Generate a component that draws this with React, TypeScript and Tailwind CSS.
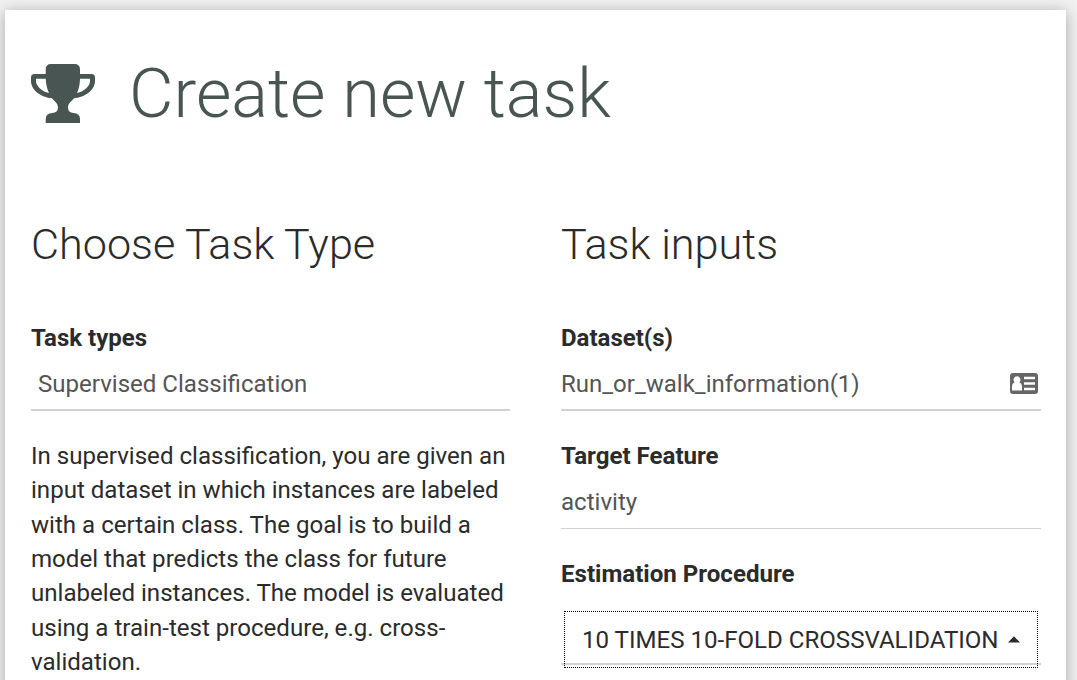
import type { SVGProps } from "react";

const description = [
  "In supervised classification, you are given an",
  "input dataset in which instances are labeled",
  "with a certain class. The goal is to build a",
  "model that predicts the class for future",
  "unlabeled instances. The model is evaluated",
  "using a train-test procedure, e.g. cross-",
  "validation.",
];

function TrophyIcon(props: SVGProps<SVGSVGElement>) {
  return (
    <svg viewBox="0 0 64 60" fill="currentColor" {...props}>
      <path
        fillRule="evenodd"
        d="M20 0H43.500Q49 0 49 5.500V10H60.500Q64 10 64 13.500V17C64 26 54 33.500 43 34.200C40.500 37.500 37 39 37 43.500Q37 48.800 42.500 48.900Q49 49.200 49 55V59H14.700V55Q14.700 49.200 21.200 48.900Q27 48.800 27 43.500C27 39 23.500 37.500 21 34.200C10 33.500 0 26 0 17V13.500Q0 10 3.500 10H14.700V5.500Q14.700 0 20 0ZM5 14.800V17C5 22 10.500 27.500 18 29C15.800 24.500 15 20 14.700 14.800ZM49 14.800C48.800 20 48.200 24.500 46 29C53.500 27.500 59 22 59 17V14.800Z"
      />
    </svg>
  );
}

function IdCardIcon(props: SVGProps<SVGSVGElement>) {
  return (
    <svg viewBox="0 0 28 21" fill="currentColor" {...props}>
      <path
        fillRule="evenodd"
        d="M3 0H25Q28 0 28 3V18Q28 21 25 21H3Q0 21 0 18V3Q0 0 3 0ZM7 3.200A3.400 3.700 0 0 0 4.700 9.600Q2 10.300 2 14V17.500H12V14Q12 10.300 9.300 9.600A3.400 3.700 0 0 0 7 3.200ZM14 3.800V6.200H25V3.800ZM14 9.300V11.700H25V9.300ZM14 14.800V17.200H25V14.800Z"
      />
    </svg>
  );
}

export default function App() {
  return (
    <div className="h-[680px] overflow-hidden bg-[#f1f1f1] pt-[10px] pr-[11px] pl-[5px] font-['Roboto',sans-serif] text-[#2b2b2b]">
      <main className="h-[700px] bg-white px-[26px] pt-[40px] shadow-[0_2px_14px_rgba(0,0,0,0.3)]">
        <header className="flex h-[86px] items-center text-[#485552]">
          <TrophyIcon className="h-[60px] w-[64px] translate-y-px" />
          <h1 className="ml-[34px] pt-[2px] text-[68.500px] leading-[86px] font-light whitespace-nowrap">Create new task</h1>
        </header>
        <div className="mt-[82px] grid grid-cols-[479px_480px] gap-x-[51px]">
          <section>
            <h2 className="pt-px text-[43.15px] leading-[52px] font-light">Choose Task Type</h2>
            <h3 className="mt-[47px] text-[24px] leading-[40px] font-bold">Task types</h3>
            <div className="flex h-[53px] items-center border-b-2 border-[#d2d2d2] pt-px pl-[7px] text-[24.05px] text-[#555555]">Supervised Classification</div>
            <p className="mt-[28px] text-[24.08px] leading-[34.35px] whitespace-nowrap">
              {description.map((line) => (
                <span key={line} className="block">{line}</span>
              ))}
            </p>
          </section>
          <section>
            <h2 className="pt-px text-[43.2px] leading-[52px] font-light">Task inputs</h2>
            <h3 className="mt-[47px] text-[24px] leading-[40px] font-bold">Dataset(s)</h3>
            <div className="flex h-[53px] items-center justify-between border-b-2 border-[#d2d2d2] pr-[3px] text-[24px] text-[#555555]">
              <span className="pt-px">Run_or_walk_information(1)</span>
              <IdCardIcon className="h-[21px] w-[28px] text-[#666666]" />
            </div>
            <h3 className="mt-[25px] text-[24.08px] leading-[40px] font-bold">Target Feature</h3>
            <div className="flex h-[53px] items-center border-b border-[#d2d2d2] text-[24.08px] text-[#555555]">activity</div>
            <h3 className="mt-[25px] text-[24.08px] leading-[40px] font-bold">Estimation Procedure</h3>
            <div className="mt-[17px] h-[54px] border-b-2 border-[#d2d2d2] pl-[3px]">
              <button className="flex h-[57px] w-[474px] items-center border border-dotted border-black pt-px pl-[17px] text-[24.08px] whitespace-nowrap">
                10 TIMES 10-FOLD CROSSVALIDATION
                <svg viewBox="0 0 12 7" className="ml-[9px] h-[7px] w-[12px] -translate-y-px fill-current">
                  <path d="M0 6.500L6 0.300L12 6.500Z" />
                </svg>
              </button>
            </div>
          </section>
        </div>
      </main>
    </div>
  );
}
